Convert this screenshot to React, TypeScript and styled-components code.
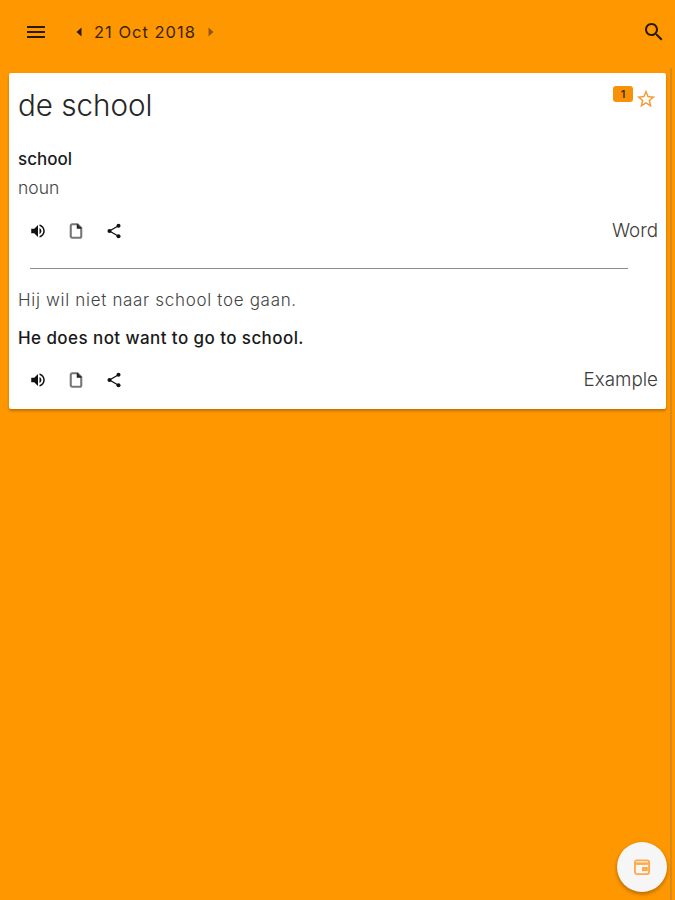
import React from "react";
import styled, { createGlobalStyle } from "styled-components";

const Global = createGlobalStyle`
  html, body { margin: 0; padding: 0; height: 100%; background: #ff9800; overflow: hidden; }
  body { font-family: Inter, "Open Sans", "Liberation Sans", sans-serif; }
`;

const Page = styled.div`
  position: relative;
  width: 675px;
  height: 900px;
  background: #ff9800;
  overflow: hidden;
`;

const Toolbar = styled.header`
  display: flex;
  align-items: center;
  height: 64px;
  padding: 0 9px 0 24px;
  color: #2a1a00;
`;

const IconSlot = styled.span`
  display: flex;
  align-items: center;
  justify-content: center;
  flex: none;
`;

const StarSlot = styled(IconSlot)`
  margin-top: 2px;
`;

const DateNav = styled.div`
  display: flex;
  align-items: center;
  margin-left: 27px;
  gap: 11px;
  flex: 1;
`;

const DateText = styled.span`
  font-size: 16.5px;
  font-weight: 400;
  letter-spacing: 1px;
  color: #3a2400;
`;

const Scrollbar = styled.div`
  position: absolute;
  top: 68px;
  right: 3px;
  width: 2px;
  bottom: 0;
  background: #d98a1c;
`;

const Card = styled.section`
  position: relative;
  margin: 9px 9px 0;
  height: 336px;
  box-sizing: border-box;
  padding: 13px 8px 0 9px;
  background: #fff;
  border-radius: 2px;
  box-shadow: 0 2px 3px rgba(120, 60, 0, 0.45);
  display: flex;
  flex-direction: column;
`;

const Title = styled.h1`
  margin: 0;
  font-size: 29.6px;
  line-height: 38px;
  font-weight: 300;
  color: #262626;
`;

const Badges = styled.div`
  position: absolute;
  top: 13px;
  right: 9px;
  display: flex;
  align-items: flex-start;
  gap: 2px;
`;

const Count = styled.span`
  display: block;
  width: 20px;
  height: 16px;
  border-radius: 3px;
  background: #f79208;
  color: #4a2c00;
  font-size: 11px;
  line-height: 16px;
  text-align: center;
  font-weight: 600;
`;

const Headword = styled.div`
  margin-top: 24px;
  font-size: 17px;
  line-height: 22px;
  font-weight: 500;
  color: #1c1c1c;
`;

const Kind = styled.div`
  margin-top: 7px;
  font-size: 17.5px;
  line-height: 22px;
  font-weight: 300;
  color: #444;
`;

const ActionRow = styled.div<{ $top: number }>`
  display: flex;
  align-items: center;
  margin-top: ${(p) => p.$top}px;
  height: 24px;
`;

const Actions = styled.div`
  display: flex;
  align-items: center;
  gap: 20px;
  flex: 1;
  padding-left: 11px;
  color: #111;
`;

const Label = styled.span`
  font-size: 18.8px;
  line-height: 24px;
  font-weight: 300;
  color: #3c3c3c;
`;

const Divider = styled.hr`
  border: 0;
  height: 1px;
  background: #8d8d8d;
  margin: 25px 30px 0 12px;
`;

const Dutch = styled.p`
  margin: 20px 0 0;
  font-size: 17px;
  line-height: 22px;
  font-weight: 300;
  letter-spacing: 0.68px;
  color: #444;
`;

const English = styled.p`
  margin: 16px 0 0;
  font-size: 17px;
  line-height: 22px;
  font-weight: 500;
  letter-spacing: 0.42px;
  color: #1a1a1a;
`;

const Fab = styled.button`
  position: absolute;
  left: 617px;
  top: 842px;
  width: 50px;
  height: 50px;
  padding: 0;
  border: 0;
  border-radius: 50%;
  background: #f6f6f6;
  box-shadow: 0 2px 4px rgba(120, 60, 0, 0.55);
  display: flex;
  align-items: center;
  justify-content: center;
  color: #ffa94a;
`;

const Menu = () => (
  <svg width="24" height="24" viewBox="0 0 24 24" fill="currentColor"><path d="M3 18h18v-2H3v2zm0-5h18v-2H3v2zm0-7v2h18V6H3z" /></svg>
);
const Left = () => (
  <svg width="8" height="12" viewBox="0 0 8 12" fill="currentColor"><path d="M6.5 1.5v9L1.5 6z" /></svg>
);
const Right = () => (
  <svg width="8" height="12" viewBox="0 0 8 12" fill="#8a5a10"><path d="M1.5 1.5v9l5-4.5z" /></svg>
);
const Search = () => (
  <svg width="24" height="24" viewBox="0 0 24 24" fill="currentColor"><path d="M15.5 14h-.79l-.28-.27C15.41 12.59 16 11.11 16 9.5 16 5.91 13.09 3 9.5 3S3 5.91 3 9.5 5.91 16 9.5 16c1.61 0 3.09-.59 4.23-1.57l.27.28v.79l5 4.99L20.49 19l-4.99-5zm-6 0C7.01 14 5 11.99 5 9.5S7.01 5 9.5 5 14 7.01 14 9.5 11.99 14 9.5 14z" /></svg>
);
const Star = () => (
  <svg width="22" height="22" viewBox="0 0 24 24" fill="#f79a2e"><path d="M22 9.24l-7.19-.62L12 2 9.19 8.63 2 9.24l5.46 4.73L5.82 21 12 17.27 18.18 21l-1.63-7.03L22 9.24zM12 15.4l-3.76 2.27 1-4.28-3.32-2.88 4.38-.38L12 6.1l1.71 4.04 4.38.38-3.32 2.88 1 4.28L12 15.4z" /></svg>
);
const Volume = () => (
  <svg width="18" height="18" viewBox="0 0 24 24" fill="currentColor"><path d="M3 9v6h4l5 5V4L7 9H3zm13.5 3c0-1.77-1.02-3.29-2.5-4.03v8.05c1.48-.73 2.5-2.25 2.5-4.02z" /><path d="M14 3.23v2.06c2.89.86 5 3.54 5 6.71s-2.11 5.85-5 6.71v2.06c4.01-.91 7-4.49 7-8.77s-2.99-7.86-7-8.77z" /></svg>
);
const Doc = () => (
  <svg width="18" height="18" viewBox="0 0 24 24" fill="none" stroke="#777" strokeWidth="2.8"><path d="M7 3h7l5 5v11a2 2 0 0 1-2 2H7a2 2 0 0 1-2-2V5a2 2 0 0 1 2-2z" /><path d="M14 3v5h5" fill="#333" stroke="#222" strokeWidth="2" /></svg>
);
const Share = () => (
  <svg width="18" height="18" viewBox="0 0 24 24" fill="currentColor"><circle cx="18" cy="5" r="2.7" /><circle cx="6" cy="12" r="2.7" /><circle cx="18" cy="19" r="2.7" /><path d="M18 5 6 12l12 7" fill="none" stroke="currentColor" strokeWidth="1.7" /></svg>
);
const CalendarIcon = () => (
  <svg width="20" height="20" viewBox="0 0 24 24" fill="none"><rect x="3.5" y="4" width="17" height="16.5" rx="2.5" stroke="currentColor" strokeWidth="2.2" /><path d="M3.5 8h17" stroke="currentColor" strokeWidth="3" /><rect x="12" y="12" width="7" height="5" fill="currentColor" /></svg>
);

const ActionIcons = () => (
  <Actions>
    <IconSlot><Volume /></IconSlot>
    <IconSlot><Doc /></IconSlot>
    <IconSlot><Share /></IconSlot>
  </Actions>
);

export default function App() {
  return (
    <Page>
      <Global />
      <Toolbar>
        <IconSlot><Menu /></IconSlot>
        <DateNav>
          <IconSlot><Left /></IconSlot>
          <DateText>21 Oct 2018</DateText>
          <IconSlot><Right /></IconSlot>
        </DateNav>
        <IconSlot><Search /></IconSlot>
      </Toolbar>
      <Card>
        <Badges>
          <Count>1</Count>
          <StarSlot><Star /></StarSlot>
        </Badges>
        <Title>de school</Title>
        <Headword>school</Headword>
        <Kind>noun</Kind>
        <ActionRow $top={20}>
          <ActionIcons />
          <Label>Word</Label>
        </ActionRow>
        <Divider />
        <Dutch>Hij wil niet naar school toe gaan.</Dutch>
        <English>He does not want to go to school.</English>
        <ActionRow $top={19}>
          <ActionIcons />
          <Label>Example</Label>
        </ActionRow>
      </Card>
      <Scrollbar />
      <Fab aria-label="Calendar"><CalendarIcon /></Fab>
    </Page>
  );
}
